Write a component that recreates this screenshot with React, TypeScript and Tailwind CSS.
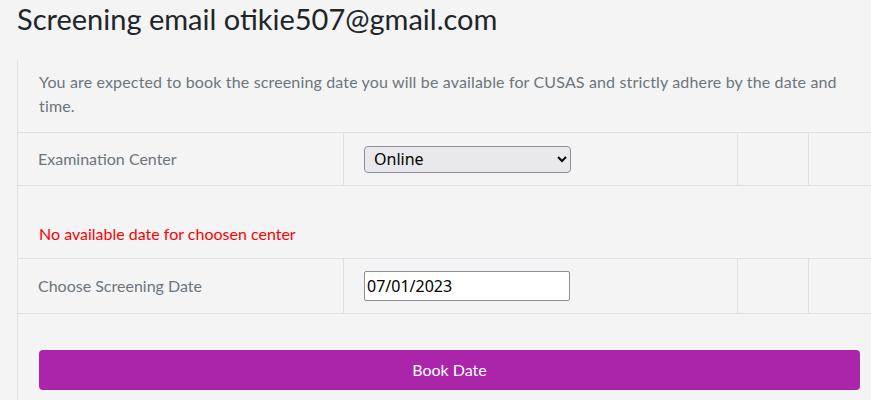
import React from 'react'

const cell = 'border-r border-[#dee2e6] flex items-center'

const App = () => {
  return (
    <div className="w-[871px] h-[400px] overflow-hidden bg-[#f4f4f4] font-['Lato',sans-serif]">
      <h1 className="pl-[17px] h-[60px] text-[29px] leading-[38px] text-[#212529]">
        Screening email otikie507@gmail.com
      </h1>
      <div className="w-[864px] ml-[17px] border-l border-[#dee2e6]">
        <p className="pl-[21px] pr-[21px] pt-[10px] pb-[14px] text-[16px] tracking-[0.15px] leading-[24px] text-[#6c757d]">
          You are expected to book the screening date you will be available for CUSAS and strictly adhere by the date and time.
        </p>
        <div className="flex h-[54px] border-t border-b border-[#dee2e6]">
          <div className={`${cell} w-[326px] pl-[20px] text-[16px] text-[#6c757d]`}>Examination Center</div>
          <div className={`${cell} w-[394px] pl-[20px]`}>
            <select className="w-[207px] h-[27px] pl-[5px] rounded-[4px] border border-[#8f8d99] bg-[#e9e8ed] text-[16px] text-black font-['Noto_Sans',sans-serif]">
              <option>Online</option>
            </select>
          </div>
          <div className={`${cell} w-[71px]`} />
          <div className="flex-1" />
        </div>
        <div className="h-[72px] flex items-end pb-[14px] px-[21px] text-[16px] leading-[20px] text-[#ff0000]">
          No available date for choosen center
        </div>
        <div className="flex h-[56px] border-t border-b border-[#dee2e6]">
          <div className={`${cell} w-[326px] pl-[20px] text-[16px] text-[#6c757d]`}>Choose Screening Date</div>
          <div className={`${cell} w-[394px] pl-[20px]`}>
            <input
              readOnly
              value="07/01/2023"
              className="w-[206px] h-[30px] pl-[2px] bg-white border border-[#8f8d99] rounded-[2px] text-[16px] text-black font-['Noto_Sans',sans-serif]"
            />
          </div>
          <div className={`${cell} w-[71px]`} />
          <div className="flex-1" />
        </div>
        <div className="pt-[36px] px-[21px] pb-[11px]">
          <button className="w-full h-[40px] rounded-[4px] bg-[#aa25aa] text-white text-[16px]">Book Date</button>
        </div>
      </div>
    </div>
  )
}

export default App
